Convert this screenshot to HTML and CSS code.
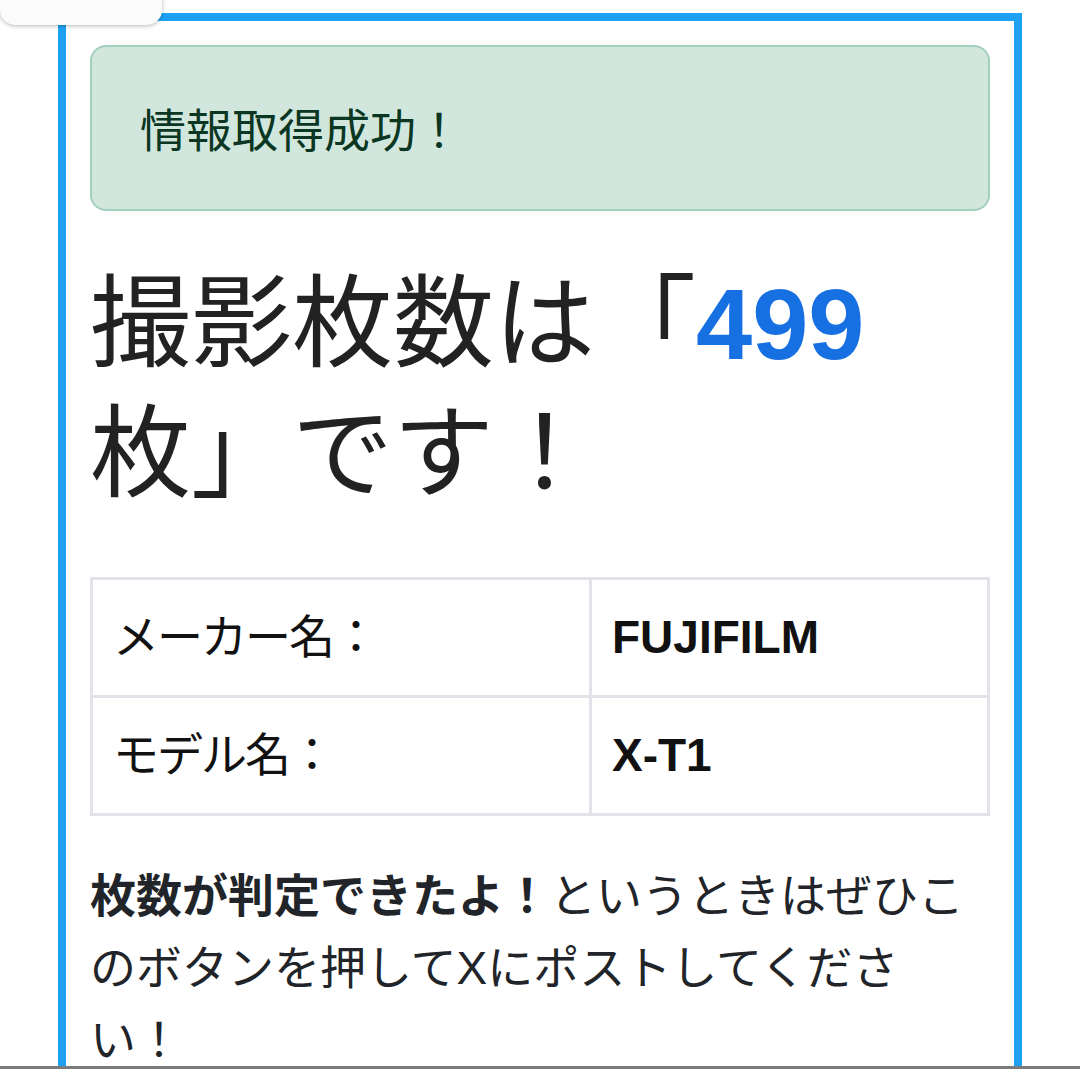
FILE: index.html
```html
<!DOCTYPE html>
<html lang="ja">
<head>
<meta charset="utf-8">
<title>撮影枚数チェック</title>
<link rel="stylesheet" href="styles.css">
</head>
<body>
<div class="top-tab"></div>
<main class="frame">
  <div class="alert-success">情報取得成功！</div>
  <h1 class="count-title">撮影枚数は「<span class="count-num">499</span>枚」です！</h1>
  <table class="info-table">
    <colgroup>
      <col class="col-label">
      <col class="col-value">
    </colgroup>
    <tbody>
      <tr>
        <td class="cell-label">メーカー名：</td>
        <td class="cell-value">FUJIFILM</td>
      </tr>
      <tr>
        <td class="cell-label">モデル名：</td>
        <td class="cell-value">X-T1</td>
      </tr>
    </tbody>
  </table>
  <p class="note"><strong class="note-strong">枚数が判定できたよ！</strong>というときはぜひこのボタンを押してXにポストしてください！</p>
</main>
<div class="bottom-edge"></div>
</body>
</html>
```

FILE: styles.css
```css
html, body {
  margin: 0;
  padding: 0;
  background: #ffffff;
}

body {
  font-family: "Liberation Sans", "Noto Sans CJK JP", sans-serif;
  font-size: 46px;
  line-height: 69px;
  color: #212529;
  overflow: hidden;
}

.top-tab {
  position: absolute;
  left: 0;
  top: -20px;
  width: 162px;
  height: 45px;
  background: #fbfbfb;
  border-radius: 0 0 15px 15px;
  box-shadow: 0 1px 4px rgba(0, 0, 0, 0.28);
  z-index: 2;
}

.frame {
  box-sizing: border-box;
  width: 964px;
  margin: 13px 0 0 58px;
  padding: 24px;
  border: 8px solid #1da1f2;
}

.alert-success {
  box-sizing: border-box;
  background: #d1e7dd;
  border: 2px solid #a3cfbb;
  border-radius: 16px;
  color: #0a3622;
  padding: 46px 46px 47px 48px;
  margin: 0 0 48px;
  font-family: "Noto Sans CJK JP", sans-serif;
}

.count-title {
  margin: 0 0 58px;
  font-size: 101px;
  line-height: 130px;
  font-weight: 400;
  color: #222222;
}

.count-num {
  font-family: "Liberation Sans", sans-serif;
  font-weight: 700;
  color: #1670e2;
}

.info-table {
  width: 897px;
  border-collapse: collapse;
  table-layout: fixed;
  margin: 0 0 44px;
  color: #111111;
}

.col-label {
  width: 499px;
}

.col-value {
  width: 398px;
}

.info-table td {
  border: 3px solid #e1e3e8;
  padding: 23px 20px;
  line-height: 69px;
  vertical-align: middle;
}

.cell-label {
  font-weight: 400;
  letter-spacing: -2px;
}

.cell-value {
  font-weight: 700;
}

.note {
  margin: 0;
  line-height: 72px;
  color: #212529;
}

.note-strong {
  font-weight: 700;
}

.bottom-edge {
  position: fixed;
  left: 0;
  right: 0;
  bottom: 0;
  height: 3px;
  background: #7b7b7b;
  z-index: 3;
}
```
